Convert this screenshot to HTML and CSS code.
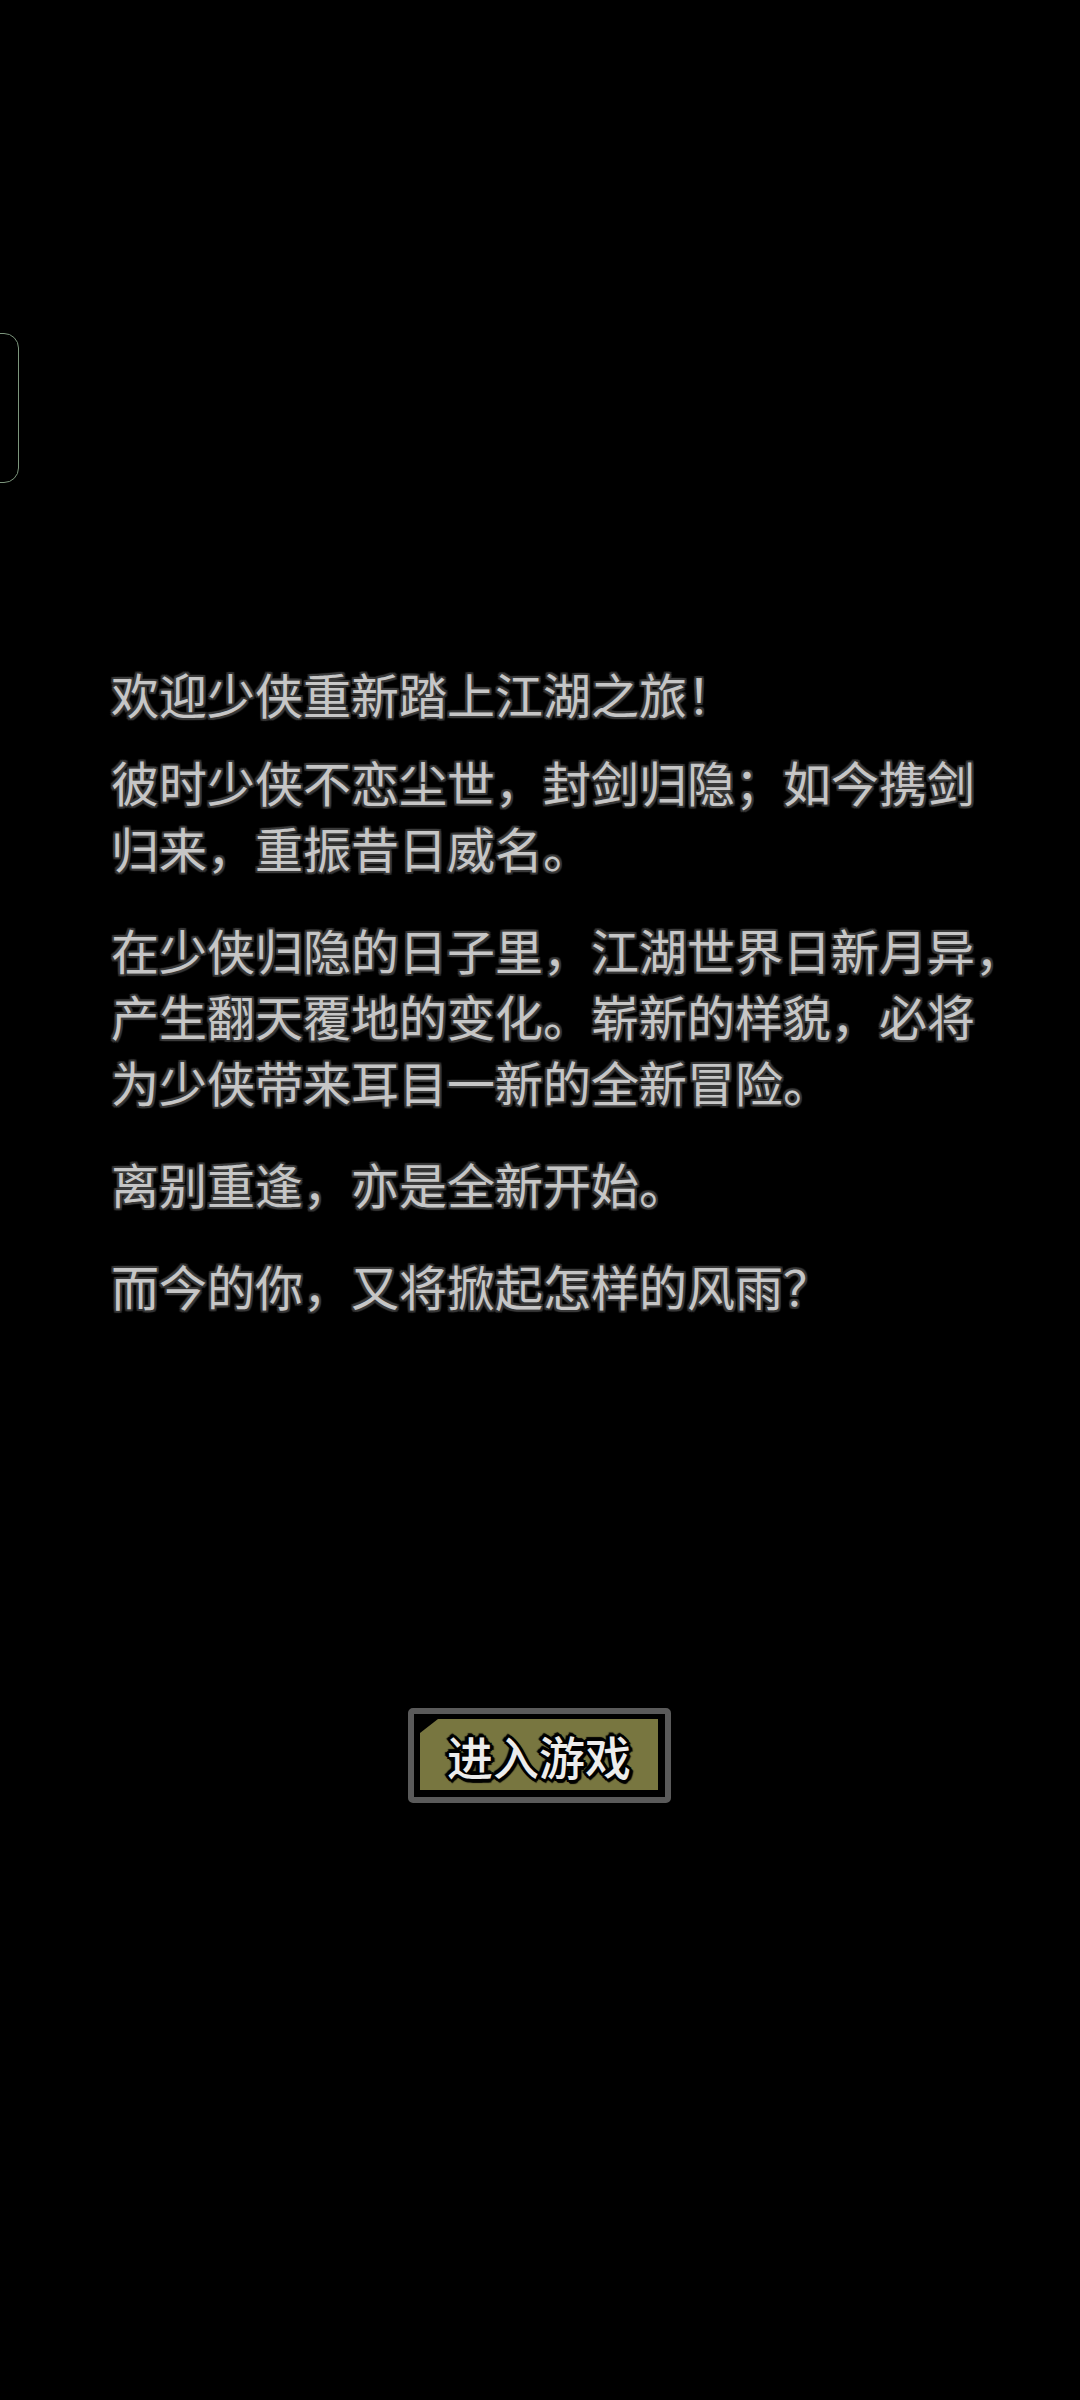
FILE: index.html
```html
<!DOCTYPE html>
<html lang="zh-CN">
<head>
  <meta charset="UTF-8" />
  <meta name="viewport" content="width=device-width, initial-scale=1.0"/>
  <title>江湖</title>
  <link rel="stylesheet" href="styles.css">
</head>
<body>

<div class="side-handle"></div>

<main class="intro">
  <p class="lead">欢迎少侠重新踏上江湖之旅！</p>
  <p>彼时少侠不恋尘世，封剑归隐；如今携剑<br>归来，重振昔日威名。</p>
  <p>在少侠归隐的日子里，江湖世界日新月异，<br>产生翻天覆地的变化。崭新的样貌，必将<br>为少侠带来耳目一新的全新冒险。</p>
  <p>离别重逢，亦是全新开始。</p>
  <p class="last">而今的你，又将掀起怎样的风雨？</p>
</main>

<div class="enter">
  <button type="button" class="enter-btn">
    <span class="enter-fill">进入游戏</span>
  </button>
</div>

</body>
</html>
```

FILE: styles.css
```css
* { box-sizing: border-box; }

html, body {
  margin: 0;
  background: #000;
}

body {
  width: 1080px;
  height: 2400px;
  position: relative;
  overflow: hidden;
  font-family: "Noto Sans CJK SC", "Noto Sans", sans-serif;
}

.side-handle {
  position: absolute;
  left: -20px;
  top: 333px;
  width: 39px;
  height: 150px;
  border: 1.5px solid #7c957c;
  border-radius: 15px;
}

.intro {
  padding: 660px 0 0 111px;
}

.intro p {
  margin: 0 0 36px;
  font-size: 48px;
  line-height: 66px;
  color: #c6c6c6;
  white-space: nowrap;
  text-shadow:
    2px 0 1px #3a3a3a, -2px 0 1px #3a3a3a,
    0 2px 1px #3a3a3a, 0 -2px 1px #3a3a3a,
    2px 2px 1px #333, -2px -2px 1px #333,
    2px -2px 1px #333, -2px 2px 1px #333;
}

.intro p.lead {
  margin-bottom: 22px;
}

.intro p.last {
  margin-bottom: 0;
}

.enter {
  display: flex;
  justify-content: center;
  margin-top: 390px;
  padding-right: 1px;
}

.enter-btn {
  width: 263px;
  height: 95px;
  padding: 5px 7px 7px 6px;
  background: #000;
  border: 6px solid #5a5a5a;
  border-radius: 5px;
  cursor: pointer;
}

.enter-fill {
  display: flex;
  align-items: center;
  justify-content: center;
  height: 100%;
  background: #787640;
  clip-path: polygon(0 14px, 18px 0, 100% 0, 100% 100%, 0 100%);
  font-family: "Noto Sans CJK SC", "Noto Sans", sans-serif;
  font-size: 46px;
  font-weight: 500;
  color: #ececec;
  text-shadow:
    3px 0 0 #000, -3px 0 0 #000, 0 3px 0 #000, 0 -3px 0 #000,
    2px 2px 0 #000, -2px -2px 0 #000, 2px -2px 0 #000, -2px 2px 0 #000,
    4px 1px 1px #000, -4px -1px 1px #000, 1px 4px 1px #000, -1px -4px 1px #000;
}
```
